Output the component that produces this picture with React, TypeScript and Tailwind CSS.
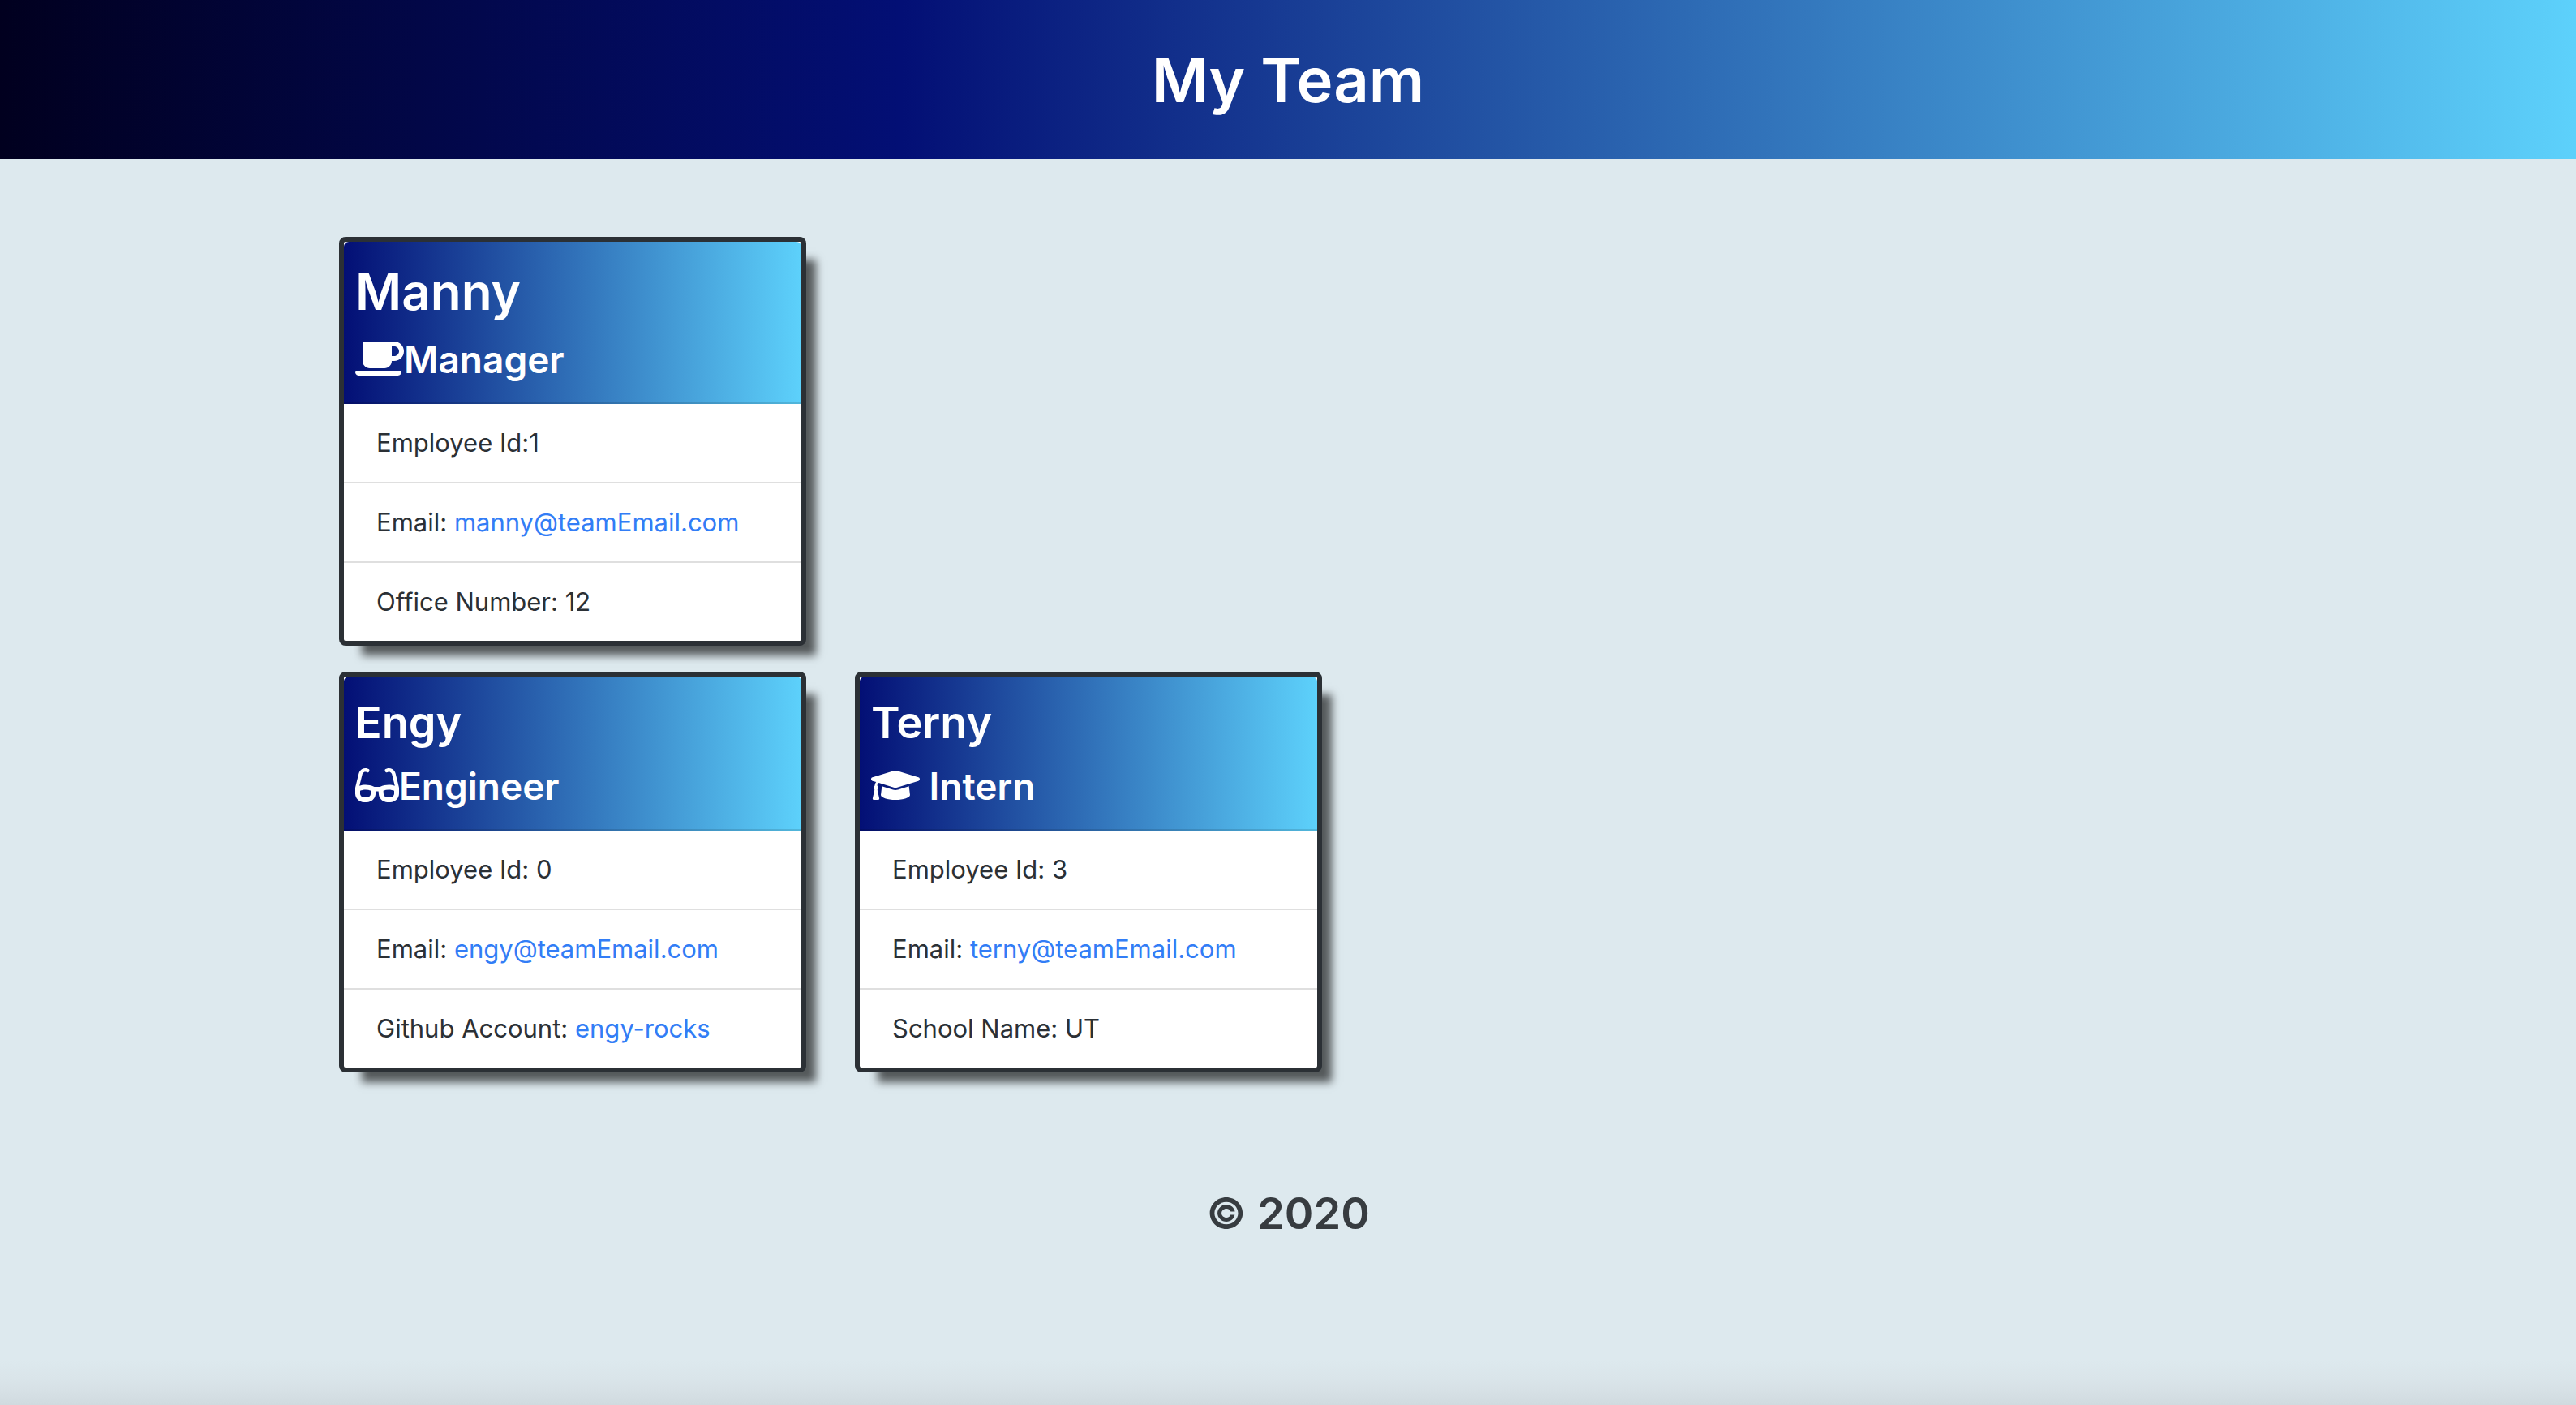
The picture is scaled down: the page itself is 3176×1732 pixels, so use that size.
import type { ReactNode } from "react";
import { FaCoffee, FaGlasses, FaGraduationCap } from "react-icons/fa";

type Member = {
  name: string;
  lead?: boolean;
  role: ReactNode;
  rows: ReactNode[];
};

function TextLink({ href, children }: { href: string; children: ReactNode }) {
  return (
    <a href={href} className="text-[#327df6] hover:underline">
      {children}
    </a>
  );
}

function MemberCard({ name, lead, role, rows }: Member) {
  return (
    <article className="w-[576px] rounded-lg border-6 border-[#2b3035] bg-white shadow-[20px_20px_10px_-8px_rgba(0,0,0,0.62)]">
      <header className="rounded-t-[6px] border-b-2 border-black/12 bg-linear-to-r/srgb from-[#030f75] to-[#5dd1fb] bg-origin-border px-3.5 py-6 font-semibold text-white">
        <h2 className={lead ? "mb-4 text-[62px] leading-[76px]" : "mb-4 text-[54px] leading-[66px]"}>
          {name}
        </h2>
        <h3 className="text-[46px] leading-[58px]">{role}</h3>
      </header>
      <ul className="divide-y-2 divide-[#dfdfdf] text-[31px] leading-[48px] text-[#2b3035]">
        {rows.map((row, i) => (
          <li key={i} className="px-10 py-6">
            {row}
          </li>
        ))}
      </ul>
    </article>
  );
}

const manager: Member = {
  name: "Manny",
  lead: true,
  role: (
    <>
      <FaCoffee className="inline h-12 w-[60px] align-[-6px]" />
      Manager
    </>
  ),
  rows: [
    "Employee Id:1",
    <>
      Email: <TextLink href="mailto:manny@teamEmail.com">manny@teamEmail.com</TextLink>
    </>,
    "Office Number: 12",
  ],
};

const staff: Member[] = [
  {
    name: "Engy",
    role: (
      <>
        <FaGlasses className="inline h-12 w-[54px] align-[-6px]" />
        Engineer
      </>
    ),
    rows: [
      "Employee Id: 0",
      <>
        Email: <TextLink href="mailto:engy@teamEmail.com">engy@teamEmail.com</TextLink>
      </>,
      <>
        Github Account: <TextLink href="#engy-rocks">engy-rocks</TextLink>
      </>,
    ],
  },
  {
    name: "Terny",
    role: (
      <>
        <FaGraduationCap className="inline h-12 w-[60px] align-[-6px]" /> Intern
      </>
    ),
    rows: [
      "Employee Id: 3",
      <>
        Email: <TextLink href="mailto:terny@teamEmail.com">terny@teamEmail.com</TextLink>
      </>,
      "School Name: UT",
    ],
  },
];

export default function App() {
  return (
    <div className="flex min-h-screen flex-col bg-[#dde9ee] font-['Inter',sans-serif]">
      <header className="bg-[linear-gradient(90deg,#01001f_0%,#030f75_35%,#5dd1fb_100%)] py-[50px] text-center text-white">
        <h1 className="text-[76px] leading-[96px] font-semibold">My Team</h1>
      </header>
      <main className="mx-auto mt-24 flex w-full max-w-[2340px] flex-col gap-8">
        <MemberCard {...manager} />
        <div className="flex flex-wrap gap-x-[60px] gap-y-8">
          {staff.map((m) => (
            <MemberCard key={m.name} {...m} />
          ))}
        </div>
      </main>
      <footer className="mt-[140px] text-center text-[54px] leading-[68px] font-semibold text-[#373c40]">
        © 2020
      </footer>
      <div className="mt-auto h-14 bg-[linear-gradient(180deg,#dde9ee_0%,#dae5ea_40%,#d6e0e5_70%,#d0dadf_100%)]" />
    </div>
  );
}
